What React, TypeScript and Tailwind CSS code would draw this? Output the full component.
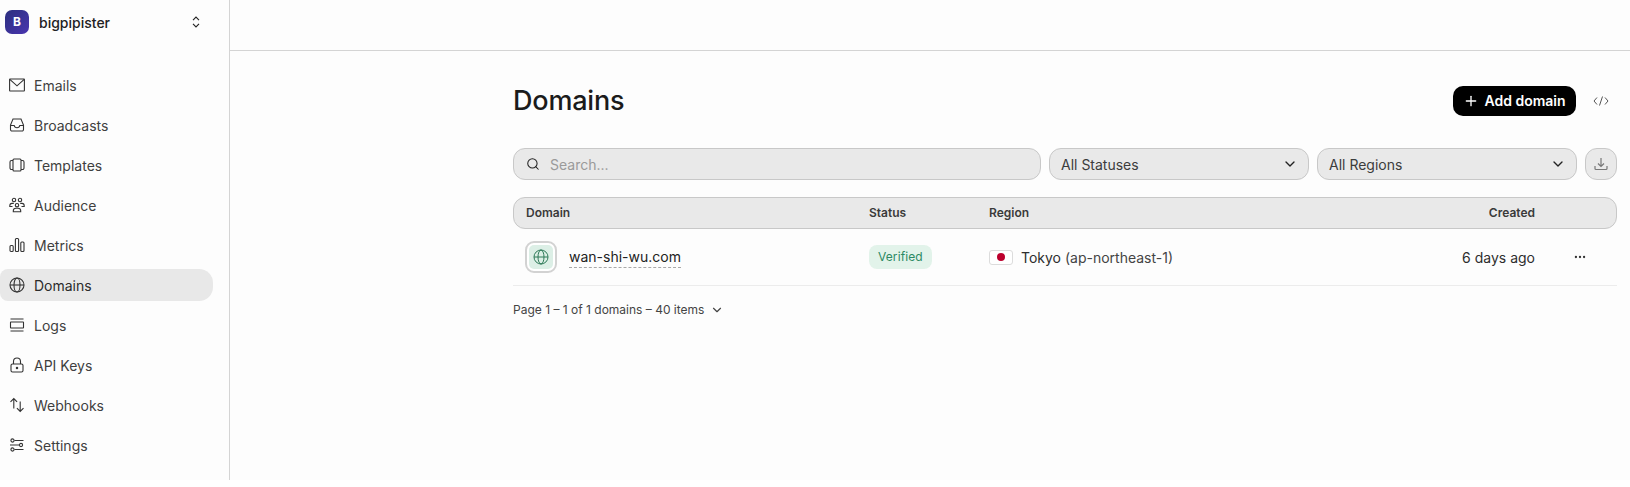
import type { ReactNode } from 'react'
import { ChevronDown, Ellipsis, Plus, Search } from 'lucide-react'

const ICON = 'h-4 w-4 shrink-0 text-[#333333]'

function Svg({ children }: { children: ReactNode }) {
  return (
    <svg viewBox="0 0 16 16" fill="none" stroke="currentColor" strokeWidth="1.1" className={ICON} aria-hidden>
      {children}
    </svg>
  )
}

const NAV: { label: string; icon: ReactNode }[] = [
  {
    label: 'Emails',
    icon: (
      <Svg>
        <rect x="0.600" y="2" width="14.800" height="12" rx="0.400" />
        <path d="M0.800 2.300l7.200 6.500 7.200-6.500" />
      </Svg>
    ),
  },
  {
    label: 'Broadcasts',
    icon: (
      <Svg>
        <path d="M4 2h8l2.500 6v4.500a1.500 1.500 0 0 1-1.500 1.500H3a1.500 1.500 0 0 1-1.500-1.500V8z" />
        <path d="M1.500 8.500h3.700c.2 1.300 1.300 2.200 2.800 2.200s2.600-.9 2.800-2.200h3.700" />
      </Svg>
    ),
  },
  {
    label: 'Templates',
    icon: (
      <Svg>
        <rect x="4" y="2" width="8" height="12" rx="1" />
        <path d="M4 3.500H2.500a1.500 1.500 0 0 0-1.500 1.500v6a1.500 1.500 0 0 0 1.500 1.500H4M12 3.500h1.500A1.500 1.500 0 0 1 15 5v6a1.500 1.500 0 0 1-1.500 1.500H12" />
      </Svg>
    ),
  },
  {
    label: 'Audience',
    icon: (
      <Svg>
        <circle cx="5" cy="3" r="1.700" />
        <circle cx="11" cy="3" r="1.700" />
        <circle cx="8" cy="8.200" r="1.700" />
        <path d="M4.800 6.400H3c-1.200 0-2.200 1-2.200 2.400v.7h2.700M11.200 6.400H13c1.200 0 2.200 1 2.200 2.400v.7h-2.700" />
        <path d="M4.300 14.800v-1c0-1.500 1.200-2.500 2.700-2.500h2c1.500 0 2.700 1 2.700 2.500v1z" />
      </Svg>
    ),
  },
  {
    label: 'Metrics',
    icon: (
      <Svg>
        <rect x="1" y="8.500" width="3.200" height="6" rx="1" />
        <rect x="6.400" y="1.500" width="3.200" height="13" rx="1" />
        <rect x="11.800" y="5" width="3.200" height="9.500" rx="1" />
      </Svg>
    ),
  },
  {
    label: 'Domains',
    icon: (
      <Svg>
        <circle cx="8" cy="8" r="7" />
        <ellipse cx="8" cy="8" rx="3" ry="7" />
        <path d="M1 8h14" />
      </Svg>
    ),
  },
  {
    label: 'Logs',
    icon: (
      <Svg>
        <path d="M1.500 2h13M1.500 14h13" />
        <rect x="1.500" y="5" width="13" height="6" rx="0.400" />
      </Svg>
    ),
  },
  {
    label: 'API Keys',
    icon: (
      <Svg>
        <rect x="2" y="7" width="12" height="8" rx="1.500" />
        <path d="M4.500 7V4.500a3.500 3.500 0 0 1 7 0V7" />
        <circle cx="8" cy="11" r="0.700" fill="currentColor" />
      </Svg>
    ),
  },
  {
    label: 'Webhooks',
    icon: (
      <Svg>
        <path d="M4.800 11.500V1.500M1.500 4.800l3.300-3.300 3.300 3.300M11.200 4.500v10M7.900 11.200l3.300 3.300 3.300-3.300" />
      </Svg>
    ),
  },
  {
    label: 'Settings',
    icon: (
      <Svg>
        <path d="M5.500 3.500h9M1 8h9M5.500 12.500h9" />
        <circle cx="3.500" cy="3.500" r="1.600" />
        <circle cx="12" cy="8" r="1.600" />
        <circle cx="3.500" cy="12.500" r="1.600" />
      </Svg>
    ),
  },
]

function Sidebar() {
  return (
    <aside className="flex h-full w-[230px] shrink-0 flex-col border-r border-[#d4d4d4]">
      <div className="flex h-[44px] items-center pl-[5px] pr-[28px]">
        <div className="flex h-6 w-6 items-center justify-center rounded-[7px] bg-gradient-to-br from-[#2b2f7e] to-[#4a35b0] text-[12px] font-bold text-white">
          B
        </div>
        <span className="ml-[10px] flex-1 text-[14px] font-medium text-[#222222]">bigpipister</span>
        <svg viewBox="0 0 12 16" fill="none" stroke="#222222" strokeWidth="1.500" className="h-[12px] w-[10px]" aria-hidden>
          <path d="M2 5.500L6 1.500l4 4M2 10.500l4 4 4-4" />
        </svg>
      </div>
      <nav className="mt-[25px] flex flex-col gap-2">
        {NAV.map((item) => (
          <div
            key={item.label}
            className={
              item.label === 'Domains'
                ? 'flex h-8 w-[213px] items-center gap-[9px] rounded-r-[14px] rounded-l-[8px] bg-[#e8e8e8] pl-[9px] text-[14px] text-[#2b2b2b]'
                : 'flex h-8 w-[213px] items-center gap-[9px] pl-[9px] text-[14px] text-[#3f3f3f]'
            }
          >
            {item.icon}
            <span>{item.label}</span>
          </div>
        ))}
      </nav>
    </aside>
  )
}

function SelectBox({ label }: { label: string }) {
  return (
    <div className="flex h-8 w-[260px] items-center justify-between rounded-[12px] border border-[#c8c8c8] bg-[#e9e9e9] pl-[11px] pr-[10px] text-[14px] text-[#3c3c3c]">
      <span>{label}</span>
      <ChevronDown className="h-4 w-4 text-[#222222]" strokeWidth={2} />
    </div>
  )
}

function Table() {
  return (
    <div className="mt-[17px]">
      <div className="flex h-8 items-center rounded-[12px] border border-[#c8c8c8] bg-[#e9e9e9] text-[12px] font-semibold text-[#3a3a3a]">
        <span className="ml-[12px] w-[343px]">Domain</span>
        <span className="w-[120px]">Status</span>
        <span className="w-[400px]">Region</span>
        <span className="w-[146px] text-right">Created</span>
      </div>
      <div className="flex h-[57px] items-center border-b border-[#ececec] text-[14px] text-[#2e2e2e]">
        <div className="ml-[12px] flex w-[344px] items-center">
          <div className="flex h-8 w-8 items-center justify-center rounded-[9px] border-2 border-[#d2d2d2] bg-white">
            <div className="flex h-6 w-6 items-center justify-center rounded-[5px] bg-[#dcefe6]">
              <svg viewBox="0 0 16 16" fill="none" stroke="#2e7a58" strokeWidth="1" className="h-4 w-4" aria-hidden>
                <circle cx="8" cy="8" r="7" />
                <ellipse cx="8" cy="8" rx="3" ry="7" />
                <path d="M1 8h14" />
              </svg>
            </div>
          </div>
          <span className="ml-[12px] border-b border-dashed border-[#a8a8a8] text-[14px] leading-[20px] text-[#222222]">
            wan-shi-wu.com
          </span>
        </div>
        <div className="w-[120px]">
          <span className="inline-flex h-6 items-center rounded-[8px] bg-[#e2f3ea] px-[9px] text-[12px] tracking-[0.1px] text-[#2c8a63]">
            Verified
          </span>
        </div>
        <div className="flex w-[399px] items-center">
          <div className="flex h-[15px] w-[24px] items-center justify-center rounded-[3px] border border-[#dcdcdc] bg-white">
            <div className="h-[8px] w-[8px] rounded-full bg-[#bc002d]" />
          </div>
          <span className="ml-[8px]">
            Tokyo <span className="text-[#444444]">(ap-northeast-1)</span>
          </span>
        </div>
        <span className="w-[147px] text-right">6 days ago</span>
        <Ellipsis className="ml-[38px] h-[14px] w-[14px] text-[#333333]" />
      </div>
      <div className="mt-[15px] flex items-center text-[12px] text-[#444444]">
        <span>Page 1 – 1 of 1 domains – 40 items</span>
        <ChevronDown className="ml-[6px] h-[14px] w-[14px]" />
      </div>
    </div>
  )
}

export default function App() {
  return (
    <div className="h-[487px] w-[1630px] overflow-hidden bg-white font-['Inter',sans-serif]">
      <div className="flex h-[480px] bg-[#fdfdfd]">
        <Sidebar />
        <main className="flex-1">
          <div className="h-[51px] border-b border-[#d4d4d4]" />
          <div className="ml-[283px] w-[1104px]">
            <div className="mt-[34px] flex h-[32px] items-center">
              <h1 className="flex-1 text-[27px] font-medium tracking-[-0.2px] text-[#1b1b1b]">Domains</h1>
              <button className="-mt-px flex h-[30px] w-[123px] items-center justify-center gap-[5px] rounded-[10px] bg-black text-[14px] font-semibold text-white">
                <Plus className="h-4 w-4" strokeWidth={2} />
                Add domain
              </button>
              <svg viewBox="0 0 16 16" fill="none" stroke="#555555" strokeWidth="1" className="ml-[17px] mr-[8px] h-4 w-4" aria-hidden>
                <path d="M4 4.500L1 8l3 3.500M12 4.500L15 8l-3 3.500M9.500 3.500l-3 9" />
              </svg>
            </div>
            <div className="mt-[31px] flex items-center gap-2">
              <div className="flex h-8 flex-1 items-center rounded-[12px] border border-[#c8c8c8] bg-[#e9e9e9] pl-[12px] text-[14px] text-[#9a9a9a]">
                <Search className="h-[14px] w-[14px] text-[#222222]" strokeWidth={1.8} />
                <span className="ml-[10px]">Search...</span>
              </div>
              <SelectBox label="All Statuses" />
              <SelectBox label="All Regions" />
              <div className="flex h-8 w-8 items-center justify-center rounded-[12px] border border-[#c8c8c8] bg-[#e9e9e9]">
                <svg viewBox="0 0 16 16" fill="none" stroke="#777777" strokeWidth="1.200" className="h-4 w-4" aria-hidden>
                  <path d="M8 2v8M5 7.500L8 10.500l3-3M2 10v2.500a1 1 0 0 0 1 1h10a1 1 0 0 0 1-1V10" />
                </svg>
              </div>
            </div>
            <Table />
          </div>
        </main>
      </div>
    </div>
  )
}
